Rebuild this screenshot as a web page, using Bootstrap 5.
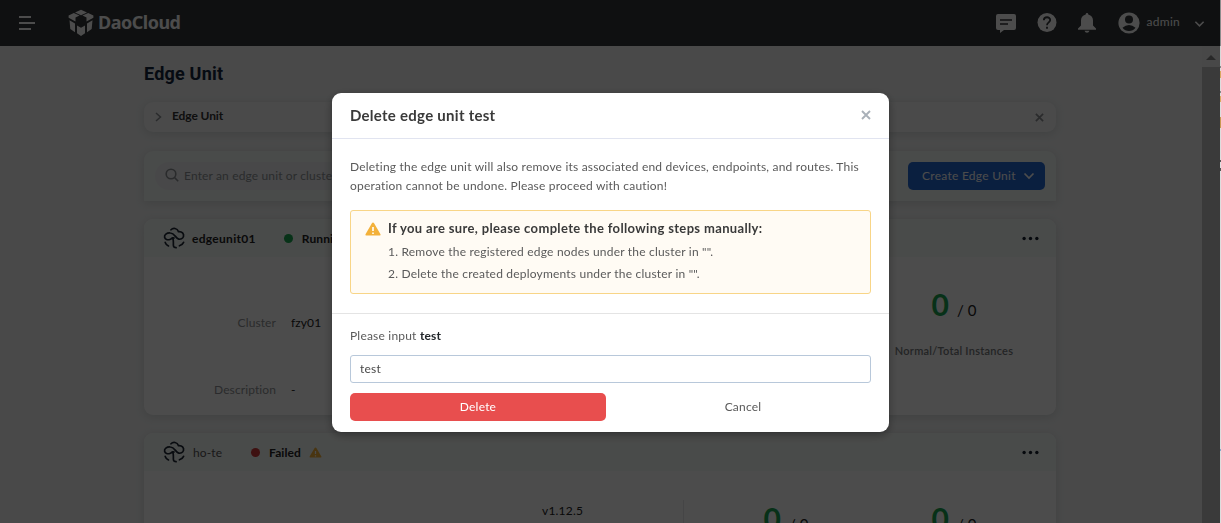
<!DOCTYPE html>
<html lang="en">
<head>
<meta charset="utf-8">
<meta name="viewport" content="width=device-width, initial-scale=1">
<title>Edge Unit</title>
<link href="https://cdn.jsdelivr.net/npm/bootstrap@5.3.0/dist/css/bootstrap.min.css" rel="stylesheet">
<style>
  body { font-family: Lato, "Open Sans", sans-serif; font-size: 12px; line-height: 19px; letter-spacing: .1px; background: #f3f4f4; color: #222; height: 523px; overflow: hidden; }
  .topbar { height: 46px; background: #323639; color: #fff; }
  .brand { font: 700 18px/24px "Noto Sans", sans-serif; letter-spacing: -.5px; margin-top: -2px; }
  .user-name { margin: -3px 0 0 7px; letter-spacing: .25px; }
  .page-body { height: 477px; overflow: hidden; }
  .content { width: 912px; margin-left: 144px; }
  .page-title { font: 700 18px/24px Roboto, sans-serif; letter-spacing: .2px; color: #14263c; margin: 16px 0 16px; }
  .panel { border-radius: 9px; background: #fff; box-shadow: 0 2px 8px rgba(90,110,110,.18); }
  .crumbs { height: 30px; padding: 0 12px 0 11px; background: #f7f8f8; margin-bottom: 19px; }
  .crumb-text { margin: -3px 0 0 10px; letter-spacing: -.1px; color: #333; }
  .filters { height: 50px; padding: 0 11px; background: #f6faf8; border-radius: 9px 9px 0 0; margin-bottom: 18px; }
  .search-box { width: 420px; height: 28px; border-radius: 14px; background: #f1f2f5; padding-left: 10px; color: #8e9296; }
  .hint { margin: -1px 0 0 5px; letter-spacing: .14px; }
  .btn-create { width: 137px; height: 28px; background: #2468d2; color: #fff; border-radius: 5px; font-size: 12px; padding: 0 9px 0 13px; line-height: 1; letter-spacing: .27px; }
  .unit { height: 196px; margin-bottom: 18px; overflow: hidden; }
  .unit-head { height: 38px; background: #f6faf8; padding: 0 17px 0 19px; }
  .state-dot { width: 9px; height: 9px; border-radius: 50%; }
  .dot-run { background: #18a850; } .dot-fail { background: #cf3a3a; }
  .fields { width: 539px; }
  .field-col { padding-top: 56px; gap: 48px; width: 398px; flex-shrink: 0; }
  .field-col.second { padding-top: 30px; width: 141px; letter-spacing: .2px; }
  .field-name { width: 132px; color: #8f9296; }
  .stats { border-left: 1px solid #e6e8ea; margin-top: 29px; padding: 0 18px; width: 373px; }
  .stat-num { font-size: 30px; line-height: 36px; color: #1aa452; font-weight: 700; }
  .stat-total { font-size: 15px; }
  .stat-name { color: #76797c; font-size: 11px; margin-top: 19px; font-weight: 600; letter-spacing: .25px; }
  .scroll-track { width: 18px; background: #f1f1f1; }
  .scroll-thumb { background: #c1c1c1; }
  .modal-backdrop.dim { --bs-backdrop-opacity: .7; width: 1220px; }
  .confirm .modal-dialog { max-width: 557px; margin: 93px auto 0; }
  .confirm .modal-content { border: 0; border-radius: 9px; box-shadow: 0 3px 10px rgba(0,0,0,.35); color: #5a5a5a; }
  .confirm .modal-header { height: 46px; padding: 0 18px 0 18px; border-color: #e1e4f0; }
  .confirm .modal-title { font-size: 15px; color: #3a3a3a; font-weight: 700; letter-spacing: .27px; }
  .confirm .modal-body { padding: 18px 18px 19px; letter-spacing: .2px; }
  .notice { height: 84px; margin-top: 15px; padding: 8px 14px; background: #fffbf4; border: 1px solid #f8d587; border-radius: 3px; }
  .notice-title { font-weight: 700; font-size: 13px; color: #3a3a3a; letter-spacing: .35px; }
  .notice ol { list-style: none; padding: 0; margin: 3px 0 0; line-height: 22px; }
  .confirm .modal-footer { padding: 12px 18px 11px; border-color: #e4e4e4; letter-spacing: .2px; }
  .confirm .form-control { height: 28px; border: 1px solid #b8c8da; border-radius: 3px; font-size: 12px; padding: 0 9px 2px; color: #4a4a4a; margin: 10px 0; letter-spacing: inherit; }
  .btn-kill, .btn-back { height: 28px; width: 256px; font-size: 12px; line-height: 26px; padding: 0; border-radius: 5px; letter-spacing: inherit; }
  .btn-kill, .btn-kill:hover { background: #e84e4e; color: #fff; }
  .btn-back { color: #5a5a5a; }
  .edge-sliver { top: 0; right: 0; width: 1px; height: 523px; z-index: 2000; background: linear-gradient(#8d8d8d 0 46px, #d8d8d8 46px 66px, #888 66px 68px, #ddd 68px 71px, #d8a860 71px 78px, #ddd 78px 91px, #888 91px 93px, #ddd 93px 96px, #d8a860 96px 102px, #ddd 102px 117px, #c89850 117px 128px, #ddd 128px 160px, #555 160px 162px, #ddd 162px 168px, #555 168px 171px, #ddd 171px 449px, #8aa8cc 449px 451px, #ddd 451px); }
</style>
</head>
<body>
<svg class="d-none">
  <symbol id="edge" viewBox="0 0 22 22"><g fill="none" stroke="currentColor" stroke-width="1.7" stroke-linecap="round"><path d="M8 2.800C10 .6 14.200 1 15.500 4.600c3.600-.4 5.600 2.200 5 4.700-.5 2.400-3.200 3.500-5.300 2.600-2.800-1-3.500-5.800-7.900-5.900C3.600 5.700 1.100 8 1.600 10.200c.5 2.300 3 3 5.200 2.300 1.500-.5 2.600-1.800 4.200-1.500"/><path d="M9.400 10.800c1.500 1.300.8 4.800 1 7.700.1 1.500.9 2.200 2.700 2.200M2.200 15.400c.5 1.600 1.600 2.700 3.300 3.500M16.400 18.800c1.900-.6 3.400-1.700 4.200-3.500"/></g></symbol>
  <symbol id="warn" viewBox="0 0 16 14"><path d="M8 .5Q8.700.5 9.100 1.200L15.500 12.200Q16 13.500 14.600 13.500H1.400Q0 13.500.5 12.200L6.900 1.200Q7.300.5 8 .5Z" fill="#f3b13a"/><path d="M8 5v4M8 10.500v1.500" stroke="#fff" stroke-width="1.600"/></symbol>
  <symbol id="cross" viewBox="0 0 10 10"><path d="M1 1l8 8M9 1l-8 8" stroke="currentColor" stroke-width="1.900"/></symbol>
  <symbol id="down" viewBox="0 0 12 8"><path d="M1.500 1.500L6 6l4.500-4.500" fill="none" stroke="currentColor" stroke-width="1.700"/></symbol>
  <symbol id="dots" viewBox="0 0 16 4"><g fill="currentColor"><circle cx="2" cy="2" r="1.600"/><circle cx="8" cy="2" r="1.600"/><circle cx="14" cy="2" r="1.600"/></g></symbol>
</svg>

<header class="topbar d-flex align-items-center">
  <svg width="17" height="14" style="margin-left:19px" viewBox="0 0 17 14"><path d="M0 1h12M0 7h16M0 13h12" stroke="#fff" stroke-width="2"/></svg>
  <svg width="26" height="28" style="margin-left:32px" viewBox="0 0 26 28"><g fill="#fff"><path d="M13 .8l6 2.700-6 2.700-6-2.700z"/><path d="M5.800 4.100l5.700 2.500-4 2v4L.6 8.800V6.500z"/><path d="M20.200 4.100l-5.700 2.500 4 2v4l6.900-3.800V6.500z"/><path d="M1.500 11.300l5.500 3.200v8.800l-4.700-3.200z"/><path d="M24.500 11.300L19 14.500v8.800l4.700-3.200z"/><path d="M9 16.500l4 2.200 4-2.200v7.800l-4 2.700-4-2.700z"/></g></svg>
  <span class="brand ms-1">DaoCloud</span>
  <div class="ms-auto d-flex align-items-center" style="padding-right:16px">
    <svg width="20" height="20" viewBox="0 0 20 20"><path d="M2 1h16a2 2 0 012 2v12a2 2 0 01-2 2H8l-4 3v-3H2a2 2 0 01-2-2V3a2 2 0 012-2z" fill="#fff"/><path d="M4 7h12M4 11h8" stroke="#323639" stroke-width="1.700"/></svg>
    <svg width="20" height="20" style="margin-left:21px" viewBox="0 0 20 20"><circle cx="10" cy="9.500" r="9.500" fill="#fff"/><path d="M6.800 7.300C6.900 3.200 13.200 3.400 13.200 7c0 2.400-3.200 2.400-3.200 5.200M10 13.700v2" fill="none" stroke="#323639" stroke-width="1.800"/></svg>
    <svg width="20" height="20" style="margin-left:20px" viewBox="0 0 20 20"><path d="M10 0q1.300 0 1.300 1.400C14.600 2.200 16 4.600 16 7.600v4.900l3 3v1.300H1v-1.300l3-3V7.600c0-3 1.400-5.400 4.700-6.200Q8.700 0 10 0zM7.500 17.800h5q-.6 2-2.500 2t-2.500-2z" fill="#fff"/></svg>
    <svg width="22" height="22" style="margin-left:21px" viewBox="0 0 22 22"><circle cx="11" cy="11" r="10.600" fill="#fff"/><circle cx="11" cy="7.500" r="4" fill="#323639"/><path d="M4.500 15.700Q7.500 13 11 13T17.500 15.700Q15 19 11 19T4.500 15.700z" fill="#323639"/></svg>
    <span class="user-name">admin</span>
    <svg width="11" height="8" style="margin-left:14px;margin-top:1px"><use href="#down"/></svg>
  </div>
</header>

<div class="page-body d-flex">
  <main class="content">
    <h1 class="page-title">Edge Unit</h1>
    <div class="panel crumbs d-flex align-items-center">
      <svg width="7" height="10" viewBox="0 0 7 10"><path d="M1 1l4.500 4L1 9" fill="none" stroke="#8c8f94" stroke-width="1.500"/></svg>
      <b class="crumb-text">Edge Unit</b>
      <svg class="ms-auto" width="9" height="9" color="#8c8f94"><use href="#cross"/></svg>
    </div>
    <div class="panel filters d-flex align-items-center justify-content-between">
      <div class="search-box d-flex align-items-center">
        <svg width="14" height="14" style="margin-top:-3px" viewBox="0 0 14 14"><g fill="none" stroke="#8c8f94" stroke-width="1.600"><circle cx="6" cy="6" r="4.800"/><path d="M9.500 9.500l3.700 3.700"/></g></svg>
        <span class="hint">Enter an edge unit or cluster name</span>
      </div>
      <button class="btn btn-create d-flex align-items-center justify-content-between">Create Edge Unit<svg width="12" height="8"><use href="#down"/></svg></button>
    </div>

    <section class="panel unit">
      <div class="unit-head d-flex align-items-center">
        <svg width="22" height="22" color="#1d2733"><use href="#edge"/></svg>
        <b class="unit-name" style="margin-left:7px;letter-spacing:.3px">edgeunit01</b>
        <span class="state-dot dot-run" style="margin-left:28px"></span><b style="margin-left:9px">Running</b>
        <svg class="ms-auto" width="17" height="5" color="#14202e"><use href="#dots"/></svg>
      </div>
      <div class="d-flex h-100">
        <div class="fields d-flex">
          <div class="field-col d-flex flex-column">
            <div class="d-flex"><span class="field-name text-end">Cluster</span><span style="margin-left:15px">fzy01</span></div>
            <div class="d-flex"><span class="field-name text-end">Description</span><span style="margin-left:15px">-</span></div>
          </div>
          <div class="field-col second"></div>
        </div>
        <div class="stats d-flex text-center">
          <div class="w-50"></div>
          <div class="w-50"><span class="stat-num">0</span><span class="stat-total"> &nbsp;/ 0</span><div class="stat-name text-nowrap">Normal/Total Instances</div></div>
        </div>
      </div>
    </section>

    <section class="panel unit">
      <div class="unit-head d-flex align-items-center">
        <svg width="22" height="22" color="#1d2733"><use href="#edge"/></svg>
        <span class="unit-name2" style="margin-left:8px;color:#555">ho-te</span>
        <span class="state-dot dot-fail" style="margin-left:29px"></span><b style="margin-left:9px">Failed</b>
        <svg width="13" height="11" style="margin-left:8px"><use href="#warn"/></svg>
        <svg class="ms-auto" width="17" height="5" color="#14202e"><use href="#dots"/></svg>
      </div>
      <div class="d-flex h-100">
        <div class="fields d-flex">
          <div class="field-col"></div>
          <div class="field-col second">v1.12.5</div>
        </div>
        <div class="stats d-flex text-center">
          <div class="w-50"><span class="stat-num">0</span><span class="stat-total"> &nbsp;/ 0</span></div>
          <div class="w-50"><span class="stat-num">0</span><span class="stat-total"> &nbsp;/ 0</span></div>
        </div>
      </div>
    </section>
  </main>
  <div class="scroll-track ms-auto d-flex flex-column align-items-center" style="margin-right:1px">
    <svg width="10" height="21" viewBox="0 0 10 21"><path d="M0 14l5-5 5 5z" fill="#858585"/></svg>
    <div class="scroll-thumb flex-fill w-100"></div>
  </div>
</div>

<div class="modal-backdrop dim show"></div>
<div class="modal confirm d-block">
  <div class="modal-dialog">
    <div class="modal-content">
      <div class="modal-header d-flex justify-content-between">
        <h2 class="modal-title">Delete edge unit test</h2>
        <svg width="10" height="10" style="margin-top:-2px" color="#a9b0b8"><use href="#cross"/></svg>
      </div>
      <div class="modal-body">
        <div class="lede">Deleting the edge unit will also remove its associated end devices, endpoints, and routes. This<br>operation cannot be undone. Please proceed with caution!</div>
        <div class="notice d-flex">
          <svg width="16" height="14" class="flex-shrink-0" style="margin-top:3px"><use href="#warn"/></svg>
          <div style="margin-left:7px">
            <div class="notice-title">If you are sure, please complete the following steps manually:</div>
            <ol><li>1. Remove the registered edge nodes under the cluster in "".</li><li>2. Delete the created deployments under the cluster in "".</li></ol>
          </div>
        </div>
      </div>
      <div class="modal-footer d-block">
        <label class="d-block m-0 ask" for="confirmName">Please input <b class="text-dark">test</b></label>
        <input id="confirmName" class="form-control" value="test">
        <div class="d-flex m-0" style="gap:9px">
          <button class="btn btn-kill">Delete</button>
          <button class="btn btn-back">Cancel</button>
        </div>
      </div>
    </div>
  </div>
</div>
<div class="edge-sliver position-absolute"></div>
<script src="https://cdn.jsdelivr.net/npm/bootstrap@5.3.0/dist/js/bootstrap.bundle.min.js"></script>
</body>
</html>
